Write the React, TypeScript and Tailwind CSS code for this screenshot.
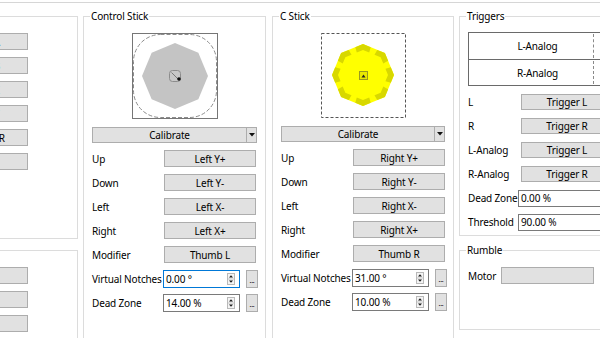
import React from "react";

const font = { fontFamily: '"Noto Sans", "Open Sans", sans-serif' };

function octagon(cx: number, cy: number, r: number) {
  var pts: string[] = [];
  for (var i = 0; i < 8; i++) {
    var a = (i * Math.PI) / 4 - Math.PI / 2;
    pts.push(`${(cx + r * Math.cos(a)).toFixed(2)},${(cy + r * Math.sin(a)).toFixed(2)}`);
  }
  return pts.join(" ");
}

// point on the octagon outline at angle phi
function octPoint(cx: number, cy: number, r: number, phi: number) {
  var step = Math.PI / 4;
  var rel = (((phi + Math.PI / 2) % step) + step) % step;
  var d = (r * Math.cos(Math.PI / 8)) / Math.cos(rel - Math.PI / 8);
  return [cx + d * Math.cos(phi), cy + d * Math.sin(phi)];
}

function notchWedges(cx: number, cy: number, outer: number, inner: number, halfDeg: number) {
  var h = (halfDeg * Math.PI) / 180;
  var out: string[] = [];
  for (var i = 0; i < 8; i++) {
    var t = (i * Math.PI) / 4 - Math.PI / 2;
    var p = [
      octPoint(cx, cy, outer, t - h),
      [cx + outer * Math.cos(t), cy + outer * Math.sin(t)],
      octPoint(cx, cy, outer, t + h),
      octPoint(cx, cy, inner, t + h),
      [cx + inner * Math.cos(t), cy + inner * Math.sin(t)],
      octPoint(cx, cy, inner, t - h),
    ];
    out.push(p.map((q) => `${q[0].toFixed(2)},${q[1].toFixed(2)}`).join(" "));
  }
  return out;
}

function Group({ title, className, children }: { title?: string; className?: string; children?: React.ReactNode }) {
  return (
    <fieldset className={`border border-[#dcdcdc] min-w-0 ${className ?? ""}`}>
      {title && <legend className="ml-[6px] px-[1px] leading-[14px] text-[10px] text-black">{title}</legend>}
      {children}
    </fieldset>
  );
}

function Btn({ text, className }: { text: string; className?: string }) {
  return (
    <div
      className={`flex shrink-0 items-center justify-center whitespace-nowrap border border-[#adadad] bg-[#e1e1e1] text-black ${className ?? ""}`}
    >
      {text}
    </div>
  );
}

function SpinArrows() {
  return (
    <svg width="8" height="12" viewBox="0 0 8 12" className="mr-[4px] shrink-0">
      <rect x="0.5" y="0.5" width="7" height="11" fill="#f4f4f4" stroke="#b9b9b9" />
      <line x1="1" y1="6" x2="7" y2="6" stroke="#c8c8c8" />
      <polygon points="2,4.5 6,4.5 4,2.2" fill="#1a1a1a" />
      <polygon points="2,7.5 6,7.5 4,9.8" fill="#1a1a1a" />
    </svg>
  );
}

function Spin({ value, focused }: { value: string; focused?: boolean }) {
  return (
    <div className="flex items-center gap-[6px]">
      <div
        className={`flex h-[18px] w-[77px] items-center justify-between border bg-white ${
          focused ? "border-[#0078d7]" : "border-[#7a7a7a]"
        }`}
      >
        <span className="pl-[2px]">{value}</span>
        <SpinArrows />
      </div>
      <div className="flex h-[18px] w-[12px] items-end justify-center border border-[#adadad] bg-[#e1e1e1] pb-[3px] text-[7px] leading-[7px]">
        ...
      </div>
    </div>
  );
}

function Calibrate() {
  return (
    <div className="flex h-[16px] items-stretch border border-[#adadad] bg-[#e1e1e1]">
      <div className="flex flex-1 items-center justify-center">Calibrate</div>
      <div className="flex w-[10px] items-center justify-center border-l border-[#adadad]">
        <svg width="6" height="4" viewBox="0 0 6 4">
          <polygon points="0,0 6,0 3,3.5" fill="#111" />
        </svg>
      </div>
    </div>
  );
}

function ControlStickDisplay() {
  return (
    <svg width="86" height="86" viewBox="0 0 86 86" className="mx-auto block">
      <rect x="0.5" y="0.5" width="85" height="85" fill="white" stroke="#767676" />
      <rect x="1.5" y="1.5" width="83" height="83" rx="27" fill="none" stroke="#8c8c8c" strokeDasharray="4 2" />
      <polygon points={octagon(43, 43, 33)} fill="#c4c4c4" />
      <rect x="37.5" y="37.5" width="11" height="11" rx="3" fill="#c8c8c8" stroke="#8c8c8c" />
      <line x1="39.5" y1="39.5" x2="46.5" y2="46.5" stroke="#7a7a7a" />
      <circle cx="47" cy="46" r="1.8" fill="#111" />
    </svg>
  );
}

function CStickDisplay() {
  return (
    <svg width="85" height="85" viewBox="0 0 85 85" className="mx-auto block">
      <rect x="0.5" y="0.5" width="84" height="84" fill="white" stroke="#555" strokeDasharray="3 2" />
      <polygon points={octagon(42, 42, 31)} fill="#ffff00" />
      {notchWedges(42, 42, 31, 25, 15.5).map((p, i) => (
        <polygon key={i} points={p} fill="#d8d800" />
      ))}
      <rect x="38.5" y="38.5" width="8" height="8" fill="#e8e800" stroke="#9a9a20" />
      <polygon points="40.5,44.5 44.5,44.5 42.5,41.5" fill="#222" />
    </svg>
  );
}

function StickGroup({
  title,
  className,
  display,
  buttons,
  notches,
  deadZone,
  focused,
}: {
  title: string;
  className: string;
  display: React.ReactNode;
  buttons: string[];
  notches: string;
  deadZone: string;
  focused?: boolean;
}) {
  var labels = ["Up", "Down", "Left", "Right", "Modifier"];
  return (
    <Group title={title} className={`${className} h-[340px] shrink-0`}>
      <div className="px-[8px]">
        <div className="mt-[10px]">{display}</div>
        <div className="mt-[8px]">
          <Calibrate />
        </div>
        <div className="mt-[7px] flex flex-col gap-[7px]">
          {labels.map((l, i) => (
            <div key={l} className="flex h-[17px] items-center">
              <span className="w-[72px] shrink-0">{l}</span>
              <Btn text={buttons[i]} className="h-[17px] w-[92px]" />
            </div>
          ))}
          <div className="flex h-[17px] items-center">
            <span className="w-[71px] shrink-0 whitespace-nowrap">Virtual Notches</span>
            <Spin value={notches} focused={focused} />
          </div>
          <div className="flex h-[17px] items-center">
            <span className="w-[71px] shrink-0">Dead Zone</span>
            <Spin value={deadZone} />
          </div>
        </div>
      </div>
    </Group>
  );
}

function AnalogBar({ text, first }: { text: string; first?: boolean }) {
  return (
    <div className={`relative flex h-[26px] items-center justify-center ${first ? "" : "border-t border-[#6a6a6a]"}`}>
      <span>{text}</span>
      <div className="absolute left-[124px] top-[1px] bottom-[1px] border-l border-dashed border-[#8a8a8a]" />
    </div>
  );
}

export default function App() {
  var gcButtons = ["Button A", "Button B", "Button X", "Button Y", "Shoulder R", "Start"];
  var dpad = ["Pad N", "Pad S", "Pad W", "Pad E"];

  return (
    <div
      className="h-[338px] w-[600px] overflow-hidden bg-white text-[10px] leading-[14px] tracking-[-0.15px] text-black"
      style={font}
    >
      <div className="pt-[2px]">
        <div className="h-px bg-[#d6d6d6]" />
      </div>
      <div className="mt-[6px] flex gap-[5px]">
        {/* left column, mostly off-screen */}
        <div className="ml-[-82px] flex w-[160px] shrink-0 flex-col">
          <Group className="mt-[7px] h-[223px] pt-[16px] pr-[49px]">
            <div className="flex flex-col items-end gap-[7px]">
              {gcButtons.map((b) => (
                <Btn key={b} text={b} className="h-[17px] w-[92px] pr-[4px]" />
              ))}
            </div>
          </Group>
          <Group className="mt-[11px] h-[120px] pt-[16px] pr-[49px]">
            <div className="flex flex-col items-end gap-[7px]">
              {dpad.map((b) => (
                <Btn key={b} text={b} className="h-[17px] w-[92px]" />
              ))}
            </div>
          </Group>
        </div>

        <StickGroup
          title="Control Stick"
          className="w-[183px]"
          display={<ControlStickDisplay />}
          buttons={["Left Y+", "Left Y-", "Left X-", "Left X+", "Thumb L"]}
          notches="0.00 °"
          deadZone="14.00 %"
          focused
        />
        <StickGroup
          title="C Stick"
          className="ml-[1px] w-[182px]"
          display={<CStickDisplay />}
          buttons={["Right Y+", "Right Y-", "Right X-", "Right X+", "Thumb R"]}
          notches="31.00 °"
          deadZone="10.00 %"
        />

        {/* triggers + rumble */}
        <div className="flex w-[170px] shrink-0 flex-col">
          <Group title="Triggers" className="h-[227px]">
            <div className="pl-[8px]">
              <div className="mt-[9px] w-[139px] border border-[#6a6a6a]">
                <AnalogBar text="L-Analog" first />
                <AnalogBar text="R-Analog" />
              </div>
              <div className="mt-[8px] flex flex-col gap-[8px]">
                {[
                  ["L", "Trigger L"],
                  ["R", "Trigger R"],
                  ["L-Analog", "Trigger L"],
                  ["R-Analog", "Trigger R"],
                ].map(([l, b]) => (
                  <div key={l} className="flex h-[16px] items-center">
                    <span className="w-[53px] shrink-0">{l}</span>
                    <Btn text={b} className="h-[16px] w-[92px]" />
                  </div>
                ))}
                {[
                  ["Dead Zone", "0.00 %"],
                  ["Threshold", "90.00 %"],
                ].map(([l, v]) => (
                  <div key={l} className="flex h-[16px] items-center">
                    <span className="w-[50px] shrink-0 whitespace-nowrap">{l}</span>
                    <div className="flex h-[17px] w-[100px] items-center border border-[#7a7a7a] bg-white pl-[2px]">{v}</div>
                  </div>
                ))}
              </div>
            </div>
          </Group>
          <Group title="Rumble" className="mt-[7px] h-[87px]">
            <div className="mt-[10px] flex h-[17px] items-center pl-[8px]">
              <span className="w-[33px] shrink-0">Motor</span>
              <div className="h-[17px] w-[93px] border border-[#adadad] bg-[#e1e1e1]" />
            </div>
          </Group>
        </div>
      </div>
    </div>
  );
}
